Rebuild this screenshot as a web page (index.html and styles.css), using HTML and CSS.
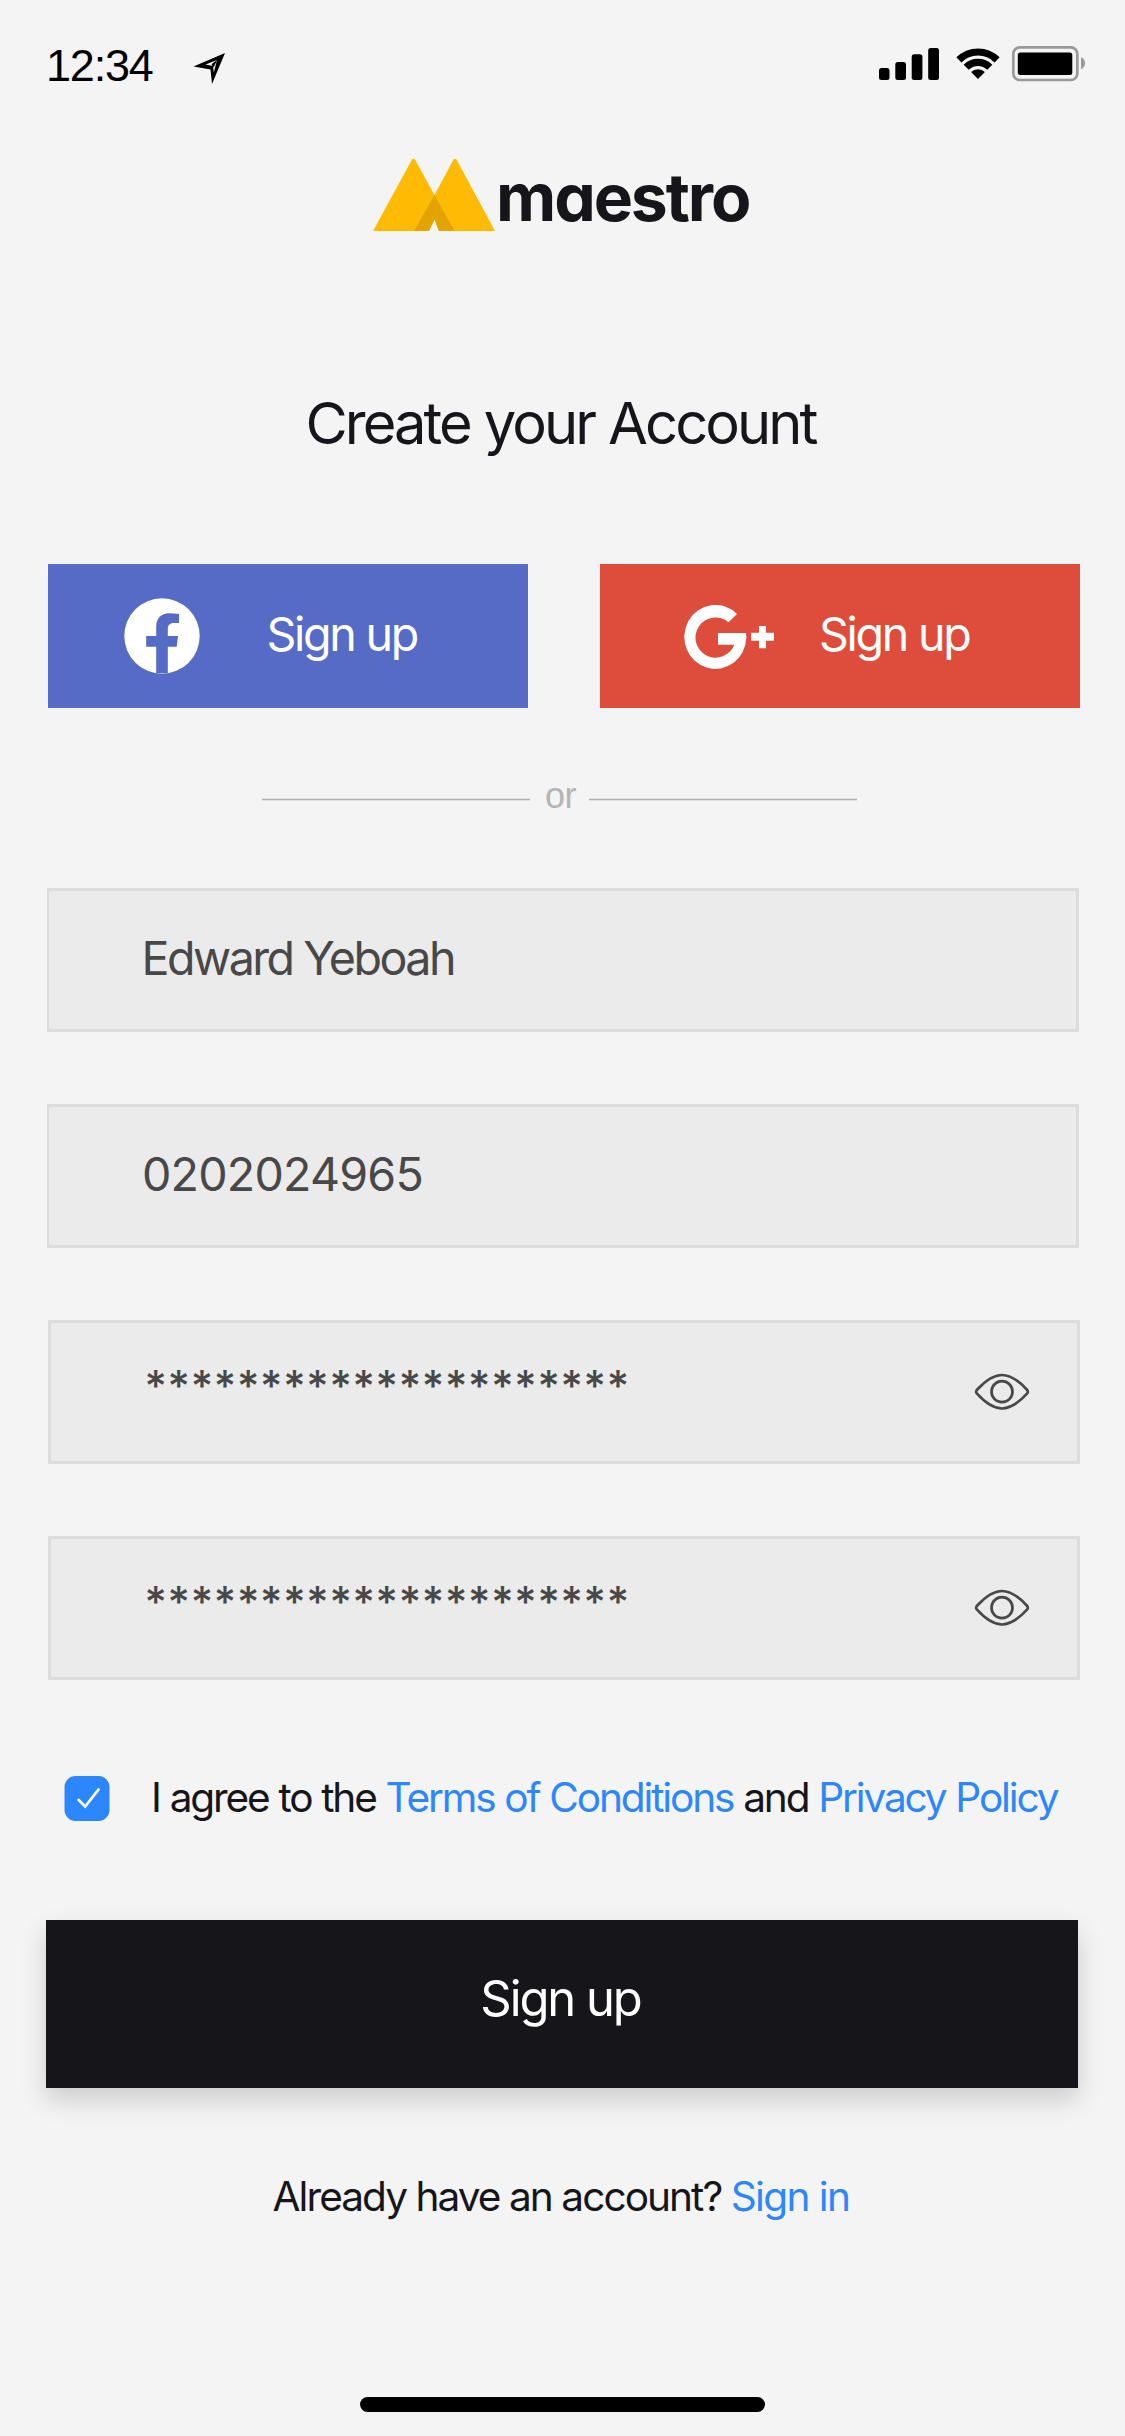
FILE: index.html
```
<!DOCTYPE html>
<html lang="en">
<head>
<meta charset="utf-8">
<title>Create your Account</title>
<link rel="stylesheet" href="styles.css">
</head>
<body>
<div class="status">
  <span class="time">12:34</span>
  <svg class="location" width="32" height="50" viewBox="193 40 32 50"><path fill-rule="evenodd" d="M225 53 212 84 210.500 69.500 193.500 66.500ZM217 60 205.500 64.600 213 66 213.800 72.500Z"/><path d="M217.500 59.500 211.500 64.200 213.500 67.500Z"/></svg>
  <svg class="signal" width="60" height="50" viewBox="879 40 60 50"><rect x="879" y="68" width="10.500" height="12" rx="2.500"/><rect x="895.300" y="62" width="10.700" height="18" rx="2.500"/><rect x="911.700" y="54.300" width="10.700" height="25.700" rx="2.500"/><rect x="928.200" y="48" width="10.800" height="32" rx="2.500"/></svg>
  <svg class="wifi" width="44" height="50" viewBox="956.500 40 44 50"><g fill="none" stroke="#000" stroke-width="7.200"><path d="M959.400 59.900A27 27 0 0 1 997.600 59.900"/><path d="M966.700 67.200A16.700 16.700 0 0 1 990.300 67.200"/></g><path d="M978.500 79 971.600 72.100A9.700 9.700 0 0 1 985.400 72.100Z"/></svg>
  <svg class="battery" width="75" height="50" viewBox="1011 40 75 50"><rect x="1013.300" y="47.300" width="64" height="32.700" rx="6.500" fill="none" stroke="#999" stroke-width="2.700"/><rect x="1017.800" y="52.500" width="54.500" height="22.500" rx="2.500"/><path d="M1081 57.200Q1085 59 1085 63.200T1081 69.200Z" fill="#999"/></svg>
</div>

<header class="brand">
  <svg width="122" height="72" viewBox="373 159 122 72"><path d="M412.300 159H414.700L434.500 195 453.800 159H456.200L495 231H439L434.500 219.500 429 231H373Z" fill="#ffbb03"/><path d="M434.500 195 454.500 231H439L434.500 219.500 429 231H414Z" fill="#e3a400"/></svg>
  <span class="wordmark">maestro</span>
</header>

<h1 class="title">Create your Account</h1>

<div class="social">
  <a class="provider facebook">
    <svg width="76" height="76" viewBox="124 598 76 76"><circle cx="162" cy="636" r="37.700" fill="#fff"/><path d="M156.200 673.300V646.800H146.200V636H156.200V627C156.200 618 161.500 613.200 169 613.200Q174 613.200 179 613.900V623H174C169.500 623 167.800 625.500 167.800 629V636H178L176.700 646.800H167.800V673.300Z" fill="#566bc6"/></svg>
    <span class="label">Sign up</span>
  </a>
  <a class="provider google">
    <svg width="90" height="66" viewBox="684 604 90 66"><path d="M737 613 728.500 621.200A20.100 20.100 0 1 0 734.300 643.800H718V632H746Q746.400 634.500 746.300 637A31 32 0 1 1 737 613ZM759 625H766V631.800H774V639.800H766V647.300H759V639.800H751.200V631.800H759Z" fill="#fff"/></svg>
    <span class="label">Sign up</span>
  </a>
</div>

<div class="divider"><i class="rule"></i><span class="or">or</span><i class="rule"></i></div>

<div class="fields">
  <div class="field plain"><span class="value">Edward Yeboah</span></div>
  <div class="field plain"><span class="value number">0202024965</span></div>
  <div class="field">
    <span class="value secret">*********************</span>
    <svg width="60" height="44" viewBox="972 1370 60 44"><g fill="none" stroke="#484848" stroke-width="2.700"><path d="M976.800 1390C985 1381 993 1375 1002 1375S1019 1381 1027.200 1390Q1028.500 1391.700 1027.200 1393.400C1019 1402.500 1011 1408.500 1002 1408.500S985 1402.500 976.800 1393.400Q975.500 1391.700 976.800 1390Z"/><circle cx="1002" cy="1391.700" r="10.500"/></g></svg>
  </div>
  <div class="field">
    <span class="value secret">*********************</span>
    <svg width="60" height="44" viewBox="972 1370 60 44"><g fill="none" stroke="#484848" stroke-width="2.700"><path d="M976.800 1390C985 1381 993 1375 1002 1375S1019 1381 1027.200 1390Q1028.500 1391.700 1027.200 1393.400C1019 1402.500 1011 1408.500 1002 1408.500S985 1402.500 976.800 1393.400Q975.500 1391.700 976.800 1390Z"/><circle cx="1002" cy="1391.700" r="10.500"/></g></svg>
  </div>
</div>

<div class="agree">
  <svg width="46" height="45" viewBox="64 1776 46 45"><rect x="64.500" y="1776" width="45" height="45" rx="11" fill="#2c87fe"/><path d="M78.700 1800 85.200 1806.500 98.500 1789.500" fill="none" stroke="#fff" stroke-width="2.800" stroke-linecap="round"/></svg>
  <span class="terms">I agree to the <a>Terms of Conditions</a> and <a>Privacy Policy</a></span>
</div>

<button class="submit">Sign up</button>

<p class="signin">Already have an account? <a>Sign in</a></p>

<div class="home"></div>
</body>
</html>
```
FILE: styles.css
```
* { box-sizing: border-box; }

body {
  margin: 0;
  width: 1125px;
  height: 2436px;
  overflow: hidden;
  background: #f4f4f4;
  color: #16151a;
  font-family: Inter, "Liberation Sans", sans-serif;
}

svg { display: block; flex: none; }

/* Status bar */
.status {
  display: flex;
  align-items: center;
  height: 130px;
  padding-left: 46px;
}
.time {
  width: 147px;
  padding-top: 1px;
  font: 45px/130px "Liberation Sans", Arial, sans-serif;
  letter-spacing: -1.2px;
  color: #000;
}
.signal { margin-left: 654px; }
.wifi { margin-left: 17px; }
.battery { margin-left: 10.5px; }

/* Brand */
.brand {
  display: flex;
  height: 72px;
  margin-top: 29px;
  padding-left: 373px;
}
.wordmark {
  padding-left: 1px;
  font-size: 66px;
  font-weight: 650;
  line-height: 76px;
  letter-spacing: -2.1px;
  font-feature-settings: "cv11";
}

.title {
  margin: 156px 0 0;
  padding-right: 4px;
  text-align: center;
  font-size: 57.8px;
  font-weight: 400;
  line-height: 72px;
  letter-spacing: -2.9px;
  word-spacing: 0.6px;
}

/* Social sign up */
.social {
  display: grid;
  grid-template-columns: 480px 480px;
  gap: 72px;
  height: 144px;
  margin: 105px 0 0 48px;
}
.provider {
  display: flex;
  align-items: center;
  color: #fff;
}
.facebook { padding-left: 76px; background: #566bc6; }
.google { padding-left: 84px; background: #de4d3b; }
.label {
  margin-top: -4px;
  font-size: 46.6px;
  letter-spacing: -2.3px;
}
.facebook .label { margin-left: 66.5px; }
.google .label { margin-left: 45px; }
.google svg { margin-top: 3px; }

/* Divider */
.divider {
  display: flex;
  align-items: center;
  height: 37px;
  margin-top: 73px;
  padding-left: 262px;
}
.rule {
  width: 268px;
  height: 3px;
  border: solid #e2e2e2;
  border-width: 1px 0;
  background: #b0b0b0;
}
.or {
  width: 59px;
  margin-top: -9px;
  padding-left: 15px;
  font: 36px/37px "Liberation Sans", Arial, sans-serif;
  letter-spacing: -0.5px;
  color: #b4b4b4;
}

/* Form */
.fields {
  display: grid;
  gap: 72px;
  margin: 70px 0 0 48px;
}
.field {
  display: flex;
  align-items: center;
  justify-content: space-between;
  width: 1032px;
  height: 144px;
  padding: 0 45px 0 93.5px;
  border: 3px solid #dcdcdc;
  background: #ebebeb;
}
.plain {
  margin-left: -1px;
  padding-left: 92.5px;
  border-left-width: 2px;
}
.value {
  margin-top: -4px;
  font-size: 46.6px;
  letter-spacing: -2.5px;
  color: #484848;
}
.number { padding-left: 0.5px; letter-spacing: -0.8px; }
.secret {
  margin-top: -15px;
  font-size: 43px;
  font-weight: 500;
  letter-spacing: 0.73px;
}

.agree {
  display: flex;
  gap: 41px;
  height: 45px;
  margin: 96px 0 0 64px;
}
.terms {
  margin-top: -1px;
  font-size: 40.6px;
  line-height: 45px;
  letter-spacing: -2.14px;
  word-spacing: 0.6px;
  white-space: nowrap;
}
a { color: #2c87fe; }
a.provider { color: #fff; }

.submit {
  display: block;
  width: 1032px;
  height: 168px;
  margin: 99px 0 0 46px;
  padding: 0 3px 12px 0;
  border: 0;
  background: #16151a;
  box-shadow: 0 12px 24px rgba(0, 0, 0, 0.16);
  color: #fff;
  font: 49px Inter, "Liberation Sans", sans-serif;
  letter-spacing: -2.1px;
}

.signin {
  margin: 79px 0 0;
  padding-right: 3px;
  text-align: center;
  font-size: 40.6px;
  line-height: 60px;
  letter-spacing: -1.95px;
}
.signin a { letter-spacing: -1.6px; }

.home {
  width: 405px;
  height: 15px;
  margin: 170px 0 0 360px;
  border-radius: 7.5px;
  background: #000;
}
```
